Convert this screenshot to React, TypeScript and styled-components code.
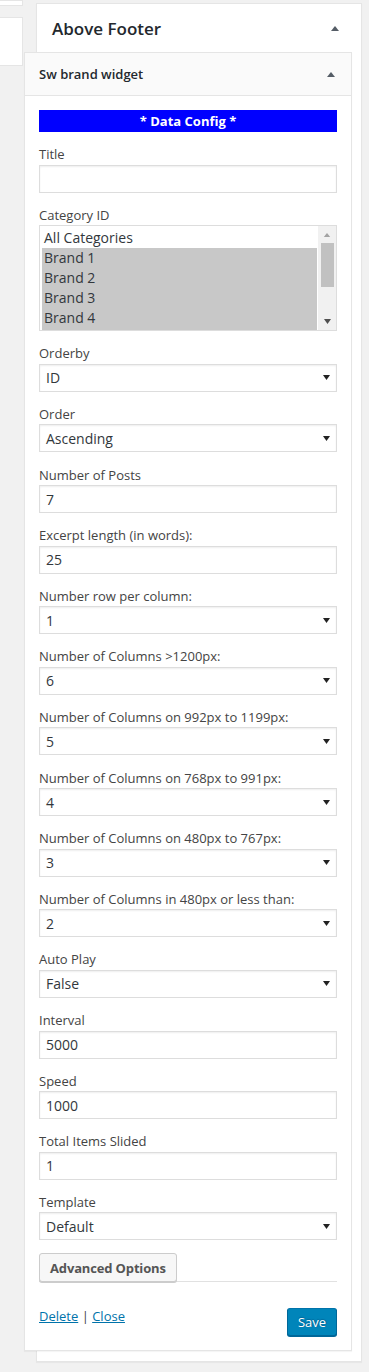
import React from "react";
import styled, { createGlobalStyle } from "styled-components";

const GlobalStyle = createGlobalStyle`
  html, body { margin: 0; padding: 0; background: #f1f1f1; }
  body { font-family: "Open Sans", "Liberation Sans", sans-serif; color: #444; font-size: 13px; }
  * { box-sizing: border-box; }
`;

const Page = styled.div`
  display: flex;
  align-items: flex-start;
  gap: 13px;
  min-height: 1372px;
`;

const Side = styled.div`
  width: 23px;
  display: flex;
  flex-direction: column;
`;

const Stub = styled.div<{ $h: number; $mt: number }>`
  height: ${(p) => p.$h}px;
  margin-top: ${(p) => p.$mt}px;
  background: #fff;
  border: 1px solid #e5e5e5;
  border-left: none;
`;

const Outer = styled.div`
  width: 326px;
  margin-top: 3px;
  background: #fff;
  border: 1px solid #e5e5e5;
  box-shadow: 0 1px 1px rgba(0, 0, 0, 0.04);
  padding-bottom: 10px;
`;

const OuterHead = styled.div`
  height: 48px;
  display: flex;
  align-items: center;
  justify-content: space-between;
  padding: 0 22px 0 15px;
`;

const OuterTitle = styled.h2`
  margin: 0;
  font-size: 17px;
  font-weight: 600;
  color: #23282d;
  line-height: 1;
  margin-top: 1px;
`;

const Arrow = styled.svg`
  display: block;
  fill: #555d66;
`;

const Widget = styled.div`
  margin: 0 9px 0 -13px;
  background: #fff;
  border: 1px solid #e5e5e5;
  box-shadow: 0 1px 1px rgba(0, 0, 0, 0.04);
`;

const WidgetHead = styled.div`
  height: 43px;
  background: #fafafa;
  border-bottom: 1px solid #e5e5e5;
  display: flex;
  align-items: center;
  justify-content: space-between;
  padding: 0 16px 0 14px;
`;

const WidgetTitle = styled.h3`
  margin: 0;
  font-size: 13px;
  font-weight: 600;
  color: #23282d;
`;

const WidgetBody = styled.div`
  padding: 14px 14px 14px 14px;
`;

const ConfigBar = styled.div`
  height: 22px;
  background: #0000ff;
  color: #fff;
  font-weight: 700;
  font-size: 13px;
  display: flex;
  align-items: center;
  justify-content: center;
`;

const Field = styled.div`
  margin-top: 13.12px;
`;

const Label = styled.label`
  display: block;
  line-height: 19.5px;
  font-size: 13px;
  color: #444;
`;

const InputBox = styled.div`
  height: 28px;
  border: 1px solid #ddd;
  background: #fff;
  box-shadow: inset 0 1px 2px rgba(0, 0, 0, 0.07);
  padding: 0 6px;
  display: flex;
  align-items: center;
  justify-content: space-between;
  font-size: 14px;
  color: #32373c;
`;

const SelectArrow = styled.svg`
  display: block;
  fill: #222;
`;

const ListBox = styled.div`
  height: 106px;
  border: 1px solid #ddd;
  background: #fff;
  display: flex;
  padding: 2px 0 0 2px;
  overflow: hidden;
  gap: 1px;
`;

const Options = styled.div`
  flex: 1;
  display: flex;
  flex-direction: column;
`;

const Option = styled.div<{ $sel?: boolean }>`
  height: 20px;
  line-height: 20px;
  padding-left: 2px;
  font-size: 14px;
  color: #32373c;
  background: ${(p) => (p.$sel ? "#c8c8c8" : "transparent")};
  flex-shrink: 0;
`;

const OptionFill = styled.div`
  flex: 1;
  background: #c8c8c8;
`;

const Scroll = styled.div`
  width: 18px;
  margin-top: -2px;
  background: #f1f1f1;
  display: flex;
  flex-direction: column;
  align-items: center;
`;

const ScrollBtn = styled.div`
  height: 17px;
  display: flex;
  align-items: center;
  justify-content: center;
`;

const Thumb = styled.div`
  width: 13px;
  height: 44px;
  background: #c1c1c1;
`;

const ScrollTrack = styled.div`
  flex: 1;
`;

const AdvRow = styled.div`
  margin-top: 13px;
  border-bottom: 1px solid #e1e1e1;
  display: flex;
`;

const AdvButton = styled.button`
  height: 29px;
  padding: 0 10px;
  background: #f7f7f7;
  border: 1px solid #ccc;
  border-radius: 3px;
  box-shadow: 0 1px 0 #ccc;
  font-family: inherit;
  font-size: 13px;
  font-weight: 700;
  letter-spacing: -0.15px;
  white-space: nowrap;
  color: #555;
  margin-bottom: -1px;
`;

const Actions = styled.div`
  margin-top: 26px;
  display: flex;
  justify-content: space-between;
  align-items: flex-start;
`;

const Links = styled.div`
  line-height: 19.5px;
  font-size: 13px;
  color: #444;
  margin-top: -1px;
`;

const Link = styled.a`
  color: #0073aa;
  text-decoration: underline;
`;

const SaveButton = styled.button`
  height: 28px;
  width: 50px;
  padding: 0 9px;
  background: #0085ba;
  border: 1px solid;
  border-color: #0073aa #006799 #006799;
  border-radius: 3px;
  box-shadow: 0 1px 0 #006799;
  color: #fff;
  text-shadow: 0 -1px 1px #006799, 1px 0 1px #006799;
  font-family: inherit;
  font-size: 13px;
`;

const Up = ({ fill = "#555d66", w = 8, h = 5 }: { fill?: string; w?: number; h?: number }) => (
  <Arrow width={w} height={h} viewBox="0 0 8 5" style={{ fill }}>
    <polygon points="4,0 8,5 0,5" />
  </Arrow>
);

const Down = ({ fill = "#222" }: { fill?: string }) => (
  <SelectArrow width="7" height="5" viewBox="0 0 7 5" style={{ fill }}>
    <polygon points="0,0 7,0 3.5,5" />
  </SelectArrow>
);

type F = { kind: "input" | "select"; label: string; value: string };

const fields: F[] = [
  { kind: "select", label: "Orderby", value: "ID" },
  { kind: "select", label: "Order", value: "Ascending" },
  { kind: "input", label: "Number of Posts", value: "7" },
  { kind: "input", label: "Excerpt length (in words):", value: "25" },
  { kind: "select", label: "Number row per column:", value: "1" },
  { kind: "select", label: "Number of Columns >1200px:", value: "6" },
  { kind: "select", label: "Number of Columns on 992px to 1199px:", value: "5" },
  { kind: "select", label: "Number of Columns on 768px to 991px:", value: "4" },
  { kind: "select", label: "Number of Columns on 480px to 767px:", value: "3" },
  { kind: "select", label: "Number of Columns in 480px or less than:", value: "2" },
  { kind: "select", label: "Auto Play", value: "False" },
  { kind: "input", label: "Interval", value: "5000" },
  { kind: "input", label: "Speed", value: "1000" },
  { kind: "input", label: "Total Items Slided", value: "1" },
  { kind: "select", label: "Template", value: "Default" },
];

export default function App() {
  return (
    <>
      <GlobalStyle />
      <Page>
        <Side>
          <Stub $h={6} $mt={0} />
          <Stub $h={49} $mt={11} />
        </Side>
        <Outer>
          <OuterHead>
            <OuterTitle>Above Footer</OuterTitle>
            <Up />
          </OuterHead>
          <Widget>
            <WidgetHead>
              <WidgetTitle>Sw brand widget</WidgetTitle>
              <Up />
            </WidgetHead>
            <WidgetBody>
              <ConfigBar>* Data Config *</ConfigBar>
              <Field>
                <Label>Title</Label>
                <InputBox />
              </Field>
              <Field>
                <Label>Category ID</Label>
                <ListBox>
                  <Options>
                    <Option>All Categories</Option>
                    <Option $sel>Brand 1</Option>
                    <Option $sel>Brand 2</Option>
                    <Option $sel>Brand 3</Option>
                    <Option $sel>Brand 4</Option>
                    <OptionFill />
                  </Options>
                  <Scroll>
                    <ScrollBtn>
                      <Up fill="#a3a3a3" w={8} h={4} />
                    </ScrollBtn>
                    <Thumb />
                    <ScrollTrack />
                    <ScrollBtn>
                      <Down fill="#505050" />
                    </ScrollBtn>
                  </Scroll>
                </ListBox>
              </Field>
              {fields.map((f) => (
                <Field key={f.label}>
                  <Label>{f.label}</Label>
                  <InputBox>
                    <span>{f.value}</span>
                    {f.kind === "select" && <Down />}
                  </InputBox>
                </Field>
              ))}
              <AdvRow>
                <AdvButton>Advanced Options</AdvButton>
              </AdvRow>
              <Actions>
                <Links>
                  <Link href="#">Delete</Link> | <Link href="#">Close</Link>
                </Links>
                <SaveButton>Save</SaveButton>
              </Actions>
            </WidgetBody>
          </Widget>
        </Outer>
      </Page>
    </>
  );
}
